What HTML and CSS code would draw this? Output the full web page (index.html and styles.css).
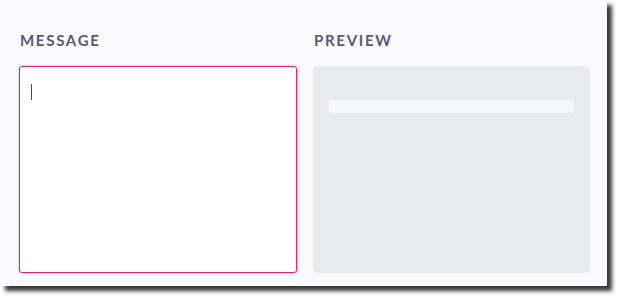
FILE: index.html
```html
<!DOCTYPE html>
<html>
<head>
<meta charset="utf-8">
<link rel="stylesheet" href="styles.css">
</head>
<body>
<div class="panel">
  <div class="column">
    <div class="label">MESSAGE</div>
    <div class="editor"><span class="caret"></span></div>
  </div>
  <div class="column">
    <div class="label">PREVIEW</div>
    <div class="preview"><div class="bar"></div></div>
  </div>
</div>
</body>
</html>
```
FILE: styles.css
```css
html, body {
  margin: 0;
  padding: 0;
  background: #ffffff;
}
body {
  height: 297px;
  overflow: hidden;
}
.panel {
  width: 607px;
  height: 286px;
  box-sizing: border-box;
  background: #f9fafc;
  box-shadow: 5px 5px 4px rgba(0, 0, 0, 0.78);
  padding: 31px 17px 0 19px;
  display: grid;
  grid-template-columns: 278px 277px;
  column-gap: 16px;
}
.column {
  display: flex;
  flex-direction: column;
}
.label {
  font-family: "Lato", "Liberation Sans", sans-serif;
  font-weight: 700;
  font-size: 15px;
  line-height: 18px;
  letter-spacing: 1.7px;
  color: #5a5779;
  padding-left: 1px;
  margin-bottom: 17px;
}
.editor {
  height: 207px;
  box-sizing: border-box;
  background: #ffffff;
  border: 1px solid #e0246c;
  border-radius: 3px;
  box-shadow: 0 0 3px rgba(224, 36, 108, 0.35);
  padding: 17px 0 0 11px;
}
.caret {
  display: block;
  width: 1px;
  height: 16px;
  background: #4a4868;
}
.preview {
  height: 207px;
  box-sizing: border-box;
  background: #e6ebef;
  border-radius: 5px;
  padding: 34px 16px 0 16px;
}
.bar {
  height: 13px;
  background: #f7f8f9;
}
```
